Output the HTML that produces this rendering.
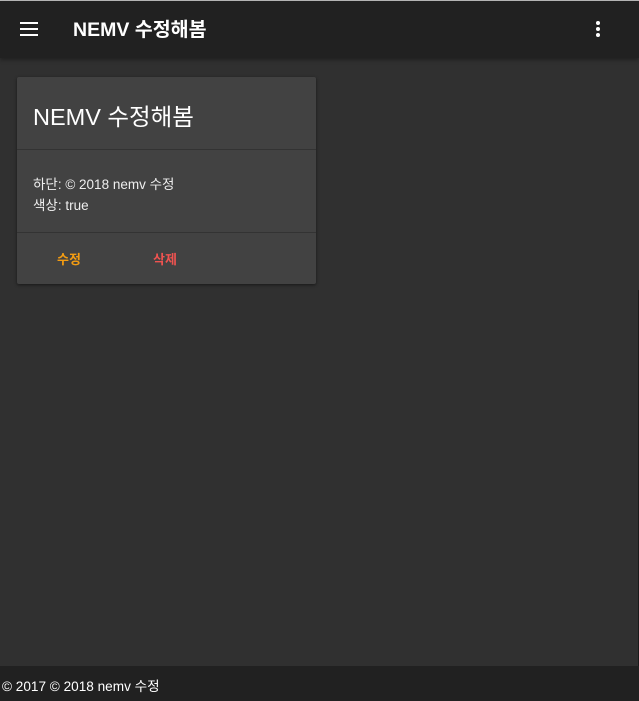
<!DOCTYPE html>
<html><head><meta charset="utf-8"><style>
*{margin:0;padding:0;box-sizing:border-box}
html,body{width:639px;height:701px;overflow:hidden;background:#303030;font-family:"Liberation Sans","Noto Sans CJK KR",sans-serif;color:#fff}
.top{position:absolute;left:0;top:0;width:639px;height:1px;background:#bbb}
.bar{position:absolute;left:0;top:1px;width:639px;height:57px;background:#212121;box-shadow:0 2px 4px rgba(0,0,0,.35)}
.ham{position:absolute;left:20px;top:21px;width:18px}
.ham i{display:block;height:2px;background:#fff;margin-bottom:4px}
.title{position:absolute;left:73px;top:12px;font-size:19.5px;font-weight:bold}
.dots{position:absolute;left:596px;top:20px}
.dots i{display:block;width:4px;height:4px;border-radius:50%;background:#fff;margin-bottom:2px}
.card{position:absolute;left:17px;top:77px;width:299px;height:207px;background:#424242;border-radius:2px;box-shadow:0 1px 3px rgba(0,0,0,.5)}
.h{position:absolute;left:16px;top:21px;font-size:23.5px}
.l1{position:absolute;left:0;top:72px;width:100%;height:1px;background:#333}
.txt{position:absolute;left:16px;top:97px;font-size:13.5px;line-height:21px;color:#eee}
.l2{position:absolute;left:0;top:155px;width:100%;height:1px;background:#333}
.b1{position:absolute;left:40px;top:172px;font-size:13px;font-weight:bold;color:#f39c12}
.b2{position:absolute;left:136px;top:172px;font-size:13px;font-weight:bold;color:#ef5350}
.foot{position:absolute;left:0;top:666px;width:639px;height:35px;background:#212121;font-size:13.6px;padding:9px 0 0 2px}
.edge{position:absolute;left:638px;top:290px;width:1px;height:376px;background:#1a1a1a}
</style></head><body>
<div class="top"></div>
<div class="bar">
<div class="ham"><i></i><i></i><i></i></div>
<div class="title">NEMV 수정해봄</div>
<div class="dots"><i></i><i></i><i></i></div>
</div>
<div class="card">
<div class="h">NEMV 수정해봄</div>
<div class="l1"></div>
<div class="txt">하단: © 2018 nemv 수정<br>색상: true</div>
<div class="l2"></div>
<div class="b1">수정</div>
<div class="b2">삭제</div>
</div>
<div class="edge"></div>
<div class="foot">© 2017 © 2018 nemv 수정</div>
</body></html>
